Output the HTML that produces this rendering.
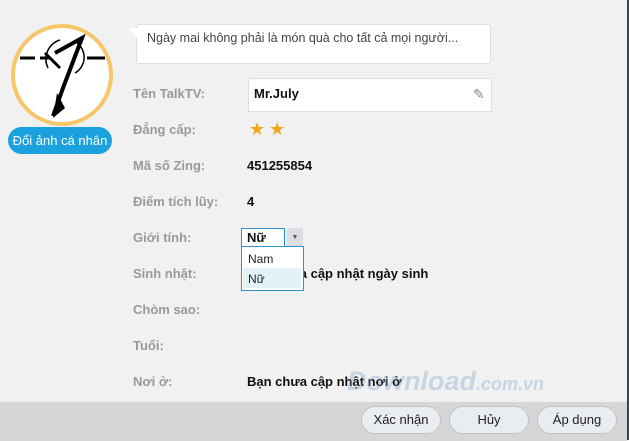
<!DOCTYPE html><html><head><meta charset="utf-8"><style>
body{margin:0;width:629px;height:440px;background:#f1f1f1;font-family:"Liberation Sans","DejaVu Sans",sans-serif;position:relative;overflow:hidden;font-size:13px}
.a{position:absolute}
.lbl{position:absolute;left:133px;color:#999;font-weight:bold;font-size:13px}
.val{position:absolute;left:247px;color:#111;font-weight:bold;font-size:13px}
.btn{position:absolute;top:406px;width:78px;height:26px;border:1px solid #bfc4cc;border-radius:14px;background:#e9ecf1;text-align:center;line-height:26px;color:#222;font-size:13px}
</style></head><body>
<div class="a" style="right:0;top:0;width:2px;height:440px;background:#3a4148"></div>
<!-- avatar -->
<div class="a" style="left:11px;top:24px;width:94px;height:94px;border:4px solid #f8c66a;border-radius:50%;background:#fff;overflow:hidden">
<svg width="94" height="94" viewBox="0 0 94 94"><g stroke="#000" fill="none" stroke-width="3"><line x1="5" y1="30" x2="20" y2="30"/><line x1="25" y1="30" x2="35" y2="30"/><line x1="72" y1="30" x2="90" y2="30"/><path d="M40 25 L67 10 L48 60 L38 88" stroke-width="4"/><path d="M30 25 L45 40" stroke-width="3"/><path d="M33 40 A20 20 0 0 1 45 12" stroke-width="1.5"/><path d="M60 45 A18 18 0 0 0 62 15" stroke-width="1.5"/></g><path d="M42 65 L38 90 L50 80 Z" fill="#000"/></svg></div>
<div class="a" style="left:8px;top:127px;width:104px;height:27px;background:#1aa1de;border-radius:14px;color:#fff;text-align:center;line-height:27px;font-size:13px">Đổi ảnh cá nhân</div>
<!-- speech -->
<div class="a" style="left:136px;top:24px;width:353px;height:38px;background:#fff;border:1px solid #ddd;border-radius:3px"></div>
<div class="a" style="left:128px;top:28px;width:0;height:0;border-top:0 solid transparent;border-bottom:10px solid transparent;border-right:9px solid #fff"></div>
<div class="a" style="left:147px;top:31px;color:#444;font-size:12.5px">Ngày mai không phải là món quà cho tất cả mọi người...</div>
<div class="lbl" style="top:86px">Tên TalkTV:</div>
<div class="a" style="left:248px;top:78px;width:242px;height:32px;background:#fff;border:1px solid #ddd"></div>
<div class="val" style="left:254px;top:86px">Mr.July</div>
<div class="a" style="left:473px;top:86px;color:#888;font-size:14px">✎</div>
<div class="lbl" style="top:122px">Đẳng cấp:</div>
<div class="a" style="left:249px;top:119px;color:#f3a51b;font-size:18px;letter-spacing:4px">★★</div>
<div class="lbl" style="top:158px">Mã số Zing:</div><div class="val" style="top:158px">451255854</div>
<div class="lbl" style="top:194px">Điểm tích lũy:</div><div class="val" style="top:194px">4</div>
<div class="lbl" style="top:230px">Giới tính:</div>
<div class="a" style="left:241px;top:228px;width:42px;height:18px;background:#fff;border:1px solid #2e8fd6"></div>
<div class="val" style="left:247px;top:230px">Nữ</div>
<div class="a" style="left:287px;top:228px;width:16px;height:19px;background:#dcdde3;color:#555;font-size:7px;text-align:center;line-height:19px">▼</div>
<div class="lbl" style="top:266px">Sinh nhật:</div><div class="val" style="top:266px">Bạn chưa cập nhật ngày sinh</div>
<div class="a" style="left:241px;top:246px;width:61px;height:43px;background:#fff;border:1px solid #2e8fd6"></div>
<div class="a" style="left:243px;top:268px;width:58px;height:20px;background:#e3f1f9"></div>
<div class="a" style="left:248px;top:252px;font-size:12px;color:#222">Nam</div>
<div class="a" style="left:248px;top:272px;font-size:12px;color:#222">Nữ</div>
<div class="lbl" style="top:302px">Chòm sao:</div>
<div class="lbl" style="top:338px">Tuổi:</div>
<div class="lbl" style="top:374px">Nơi ở:</div><div class="val" style="top:374px">Bạn chưa cập nhật nơi ở</div>
<div class="a" style="left:347px;top:366px;color:rgba(120,160,200,.35);font-size:27px;font-weight:bold;font-style:italic">Download<span style="font-size:18px">.com.vn</span></div>
<div class="a" style="left:0;top:401px;width:627px;height:39px;background:#d6d6d6;border-top:1px solid #eee"></div>
<div class="btn" style="left:361px">Xác nhận</div>
<div class="btn" style="left:449px">Hủy</div>
<div class="btn" style="left:537px">Áp dụng</div>
</body></html>
